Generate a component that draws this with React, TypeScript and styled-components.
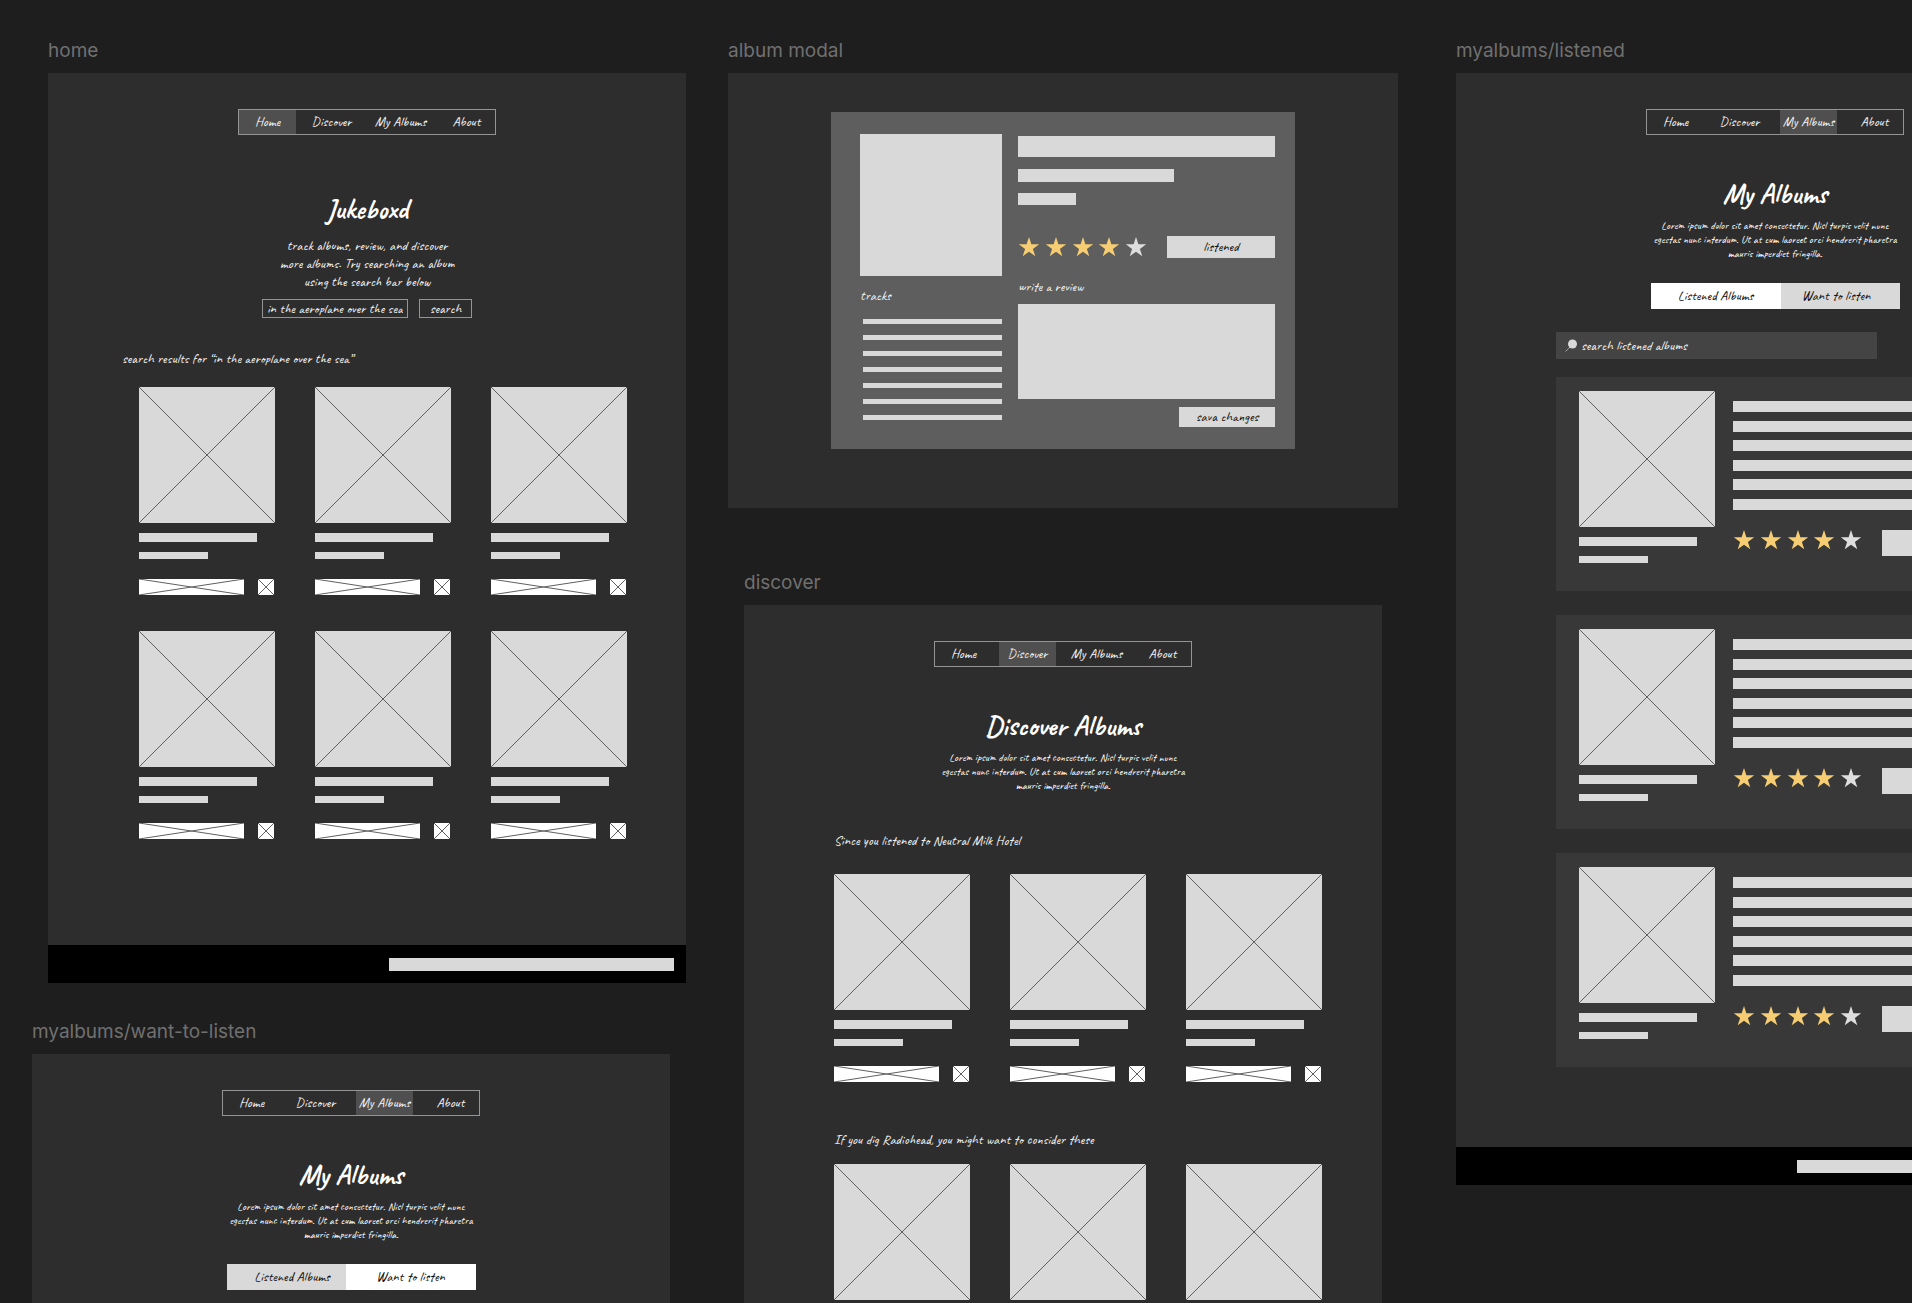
import React from "react";
import styled, { createGlobalStyle } from "styled-components";

const hand = `normal 400 14px/18px Caveat, Lato, "Liberation Sans", sans-serif`;
const fill = "#d9d9d9";

const GlobalStyle = createGlobalStyle`
  *, *::before, *::after { box-sizing: border-box; }
  body { margin: 0; background: #1e1e1e; color: #f2f2f2; font: ${hand}; }
  h1, h2, h3, p { margin: 0; font: inherit; }
  button, input, textarea { font: inherit; color: inherit; margin: 0; padding: 0; border: 0; border-radius: 0; background: none; }
`;

const Canvas = styled.main`
  position: relative;
  width: 100%;
  height: 100vh;
  overflow: hidden;
`;

const Artboard = styled.section<{ $x: number; $y: number; $w?: number }>`
  position: absolute;
  left: ${(p) => p.$x}px;
  top: ${(p) => p.$y}px;
  width: ${(p) => p.$w ?? 638}px;
`;

const BoardLabel = styled.h2`
  margin-bottom: 10px;
  color: #707070;
  font: normal 400 19px/24px Inter, "Liberation Sans", sans-serif;
`;

const Sheet = styled.div<{ $h: number; $top?: number }>`
  display: flex;
  flex-direction: column;
  align-items: center;
  min-height: ${(p) => p.$h}px;
  padding-top: ${(p) => p.$top ?? 36}px;
  background: #2d2d2d;
`;

const NavBar = styled.nav`
  display: grid;
  grid-template-columns: 64px 69px 66px 57px;
  width: 258px;
  height: 26px;
  border: 1px solid #949494;
`;

const NavLink = styled.a<{ $active: boolean }>`
  width: 57px;
  line-height: 24px;
  text-align: center;
  text-decoration: none;
  white-space: nowrap;
  color: inherit;
  background: ${(p) => (p.$active ? "#4f4f4f" : "transparent")};
`;

const Title = styled.h1<{ $gap: number }>`
  margin-top: ${(p) => p.$gap}px;
  color: #fff;
  font-size: 28px;
  font-weight: 700;
  line-height: 28px;
`;

const Intro = styled.p`
  width: 190px;
  margin-top: 14px;
  text-align: center;
  white-space: nowrap;
`;

const Blurb = styled.p`
  width: 250px;
  margin-top: 10px;
  text-align: center;
  white-space: nowrap;
  font-size: 11px;
  font-weight: 500;
  line-height: 14px;
  color: #fff;
`;

const SearchForm = styled.form`
  display: flex;
  gap: 11px;
  margin-top: 8px;
`;

const SearchInput = styled.input`
  && {
    width: 146px;
    height: 19px;
    padding: 0 4px;
    border: 1px solid #949494;
  }
`;

const SearchButton = styled.button`
  && {
    width: 53px;
    height: 19px;
    border: 1px solid #949494;
    line-height: 17px;
  }
`;

const Results = styled.div<{ $gap: number; $left: number }>`
  align-self: stretch;
  margin-top: ${(p) => p.$gap}px;
  padding-left: ${(p) => p.$left}px;
`;

const AlbumGrid = styled.div<{ $gap: number; $indent?: number }>`
  display: grid;
  grid-template-columns: repeat(3, 136px);
  gap: 36px 40px;
  margin-top: ${(p) => p.$gap}px;
  margin-left: ${(p) => p.$indent ?? 0}px;
`;

const CrossSvg = styled.svg`
  display: block;
  width: 100%;
  height: 100%;
`;

const Cover = styled.div<{ $size?: number }>`
  width: ${(p) => p.$size ?? 136}px;
  height: ${(p) => p.$size ?? 136}px;
  background: ${fill};
`;

const Bar = styled.div<{ $w?: number; $h: number; $gap?: number }>`
  width: ${(p) => (p.$w ? `${p.$w}px` : "100%")};
  height: ${(p) => p.$h}px;
  margin-top: ${(p) => p.$gap ?? 0}px;
  background: ${fill};
`;

const CardActions = styled.div`
  display: flex;
  gap: 14px;
  margin-top: 20px;
`;

const CrossButton = styled.button<{ $w: number }>`
  && {
    width: ${(p) => p.$w}px;
    height: 16px;
    background: #fff;
  }
`;

const Footer = styled.footer`
  display: flex;
  align-items: center;
  justify-content: flex-end;
  align-self: stretch;
  height: 38px;
  margin-top: auto;
  padding-right: 12px;
  background: #000;
`;

const Modal = styled.div`
  display: grid;
  grid-template-columns: 142px 257px;
  column-gap: 16px;
  width: 464px;
  height: 337px;
  padding: 22px 20px 22px 29px;
  background: #5e5e5e;
`;

const ModalMain = styled.div`
  display: flex;
  flex-direction: column;
  padding-top: 2px;
`;

const TrackList = styled.div`
  display: grid;
  gap: 11px;
  margin-top: 14px;
  padding-left: 3px;
`;

const FieldLabel = styled.label`
  display: block;
  margin-top: 20px;
`;

const TracksHeading = styled.h3`
  margin-top: 11px;
`;

const RatingRow = styled.div<{ $gap: number; $align: string }>`
  display: flex;
  align-items: ${(p) => p.$align};
  gap: 20px;
  margin-top: ${(p) => p.$gap}px;
`;

const Stars = styled.div`
  display: flex;
  justify-content: space-between;
  width: 129px;
  svg { display: block; width: 22px; height: 20px; }
`;

const GreyButton = styled.button<{ $w: number; $h: number }>`
  && {
    width: ${(p) => p.$w}px;
    height: ${(p) => p.$h}px;
    color: #111;
    background: ${fill};
  }
`;

const Review = styled.textarea`
  && {
    display: block;
    width: 100%;
    height: 95px;
    margin-top: 8px;
    background: ${fill};
    color: #111;
    resize: none;
  }
`;

const SaveRow = styled.div`
  display: flex;
  justify-content: flex-end;
  margin-top: 8px;
`;

const Toggle = styled.div`
  display: flex;
  margin-top: 23px;
`;

const ToggleButton = styled.button<{ $active: boolean }>`
  && {
    width: ${(p) => (p.$active ? 130 : 119)}px;
    height: 26px;
    color: #111;
    background: ${(p) => (p.$active ? "#fff" : fill)};
  }
  &&:first-child { padding-left: ${(p) => (p.$active ? 0 : 12)}px; }
  &&:last-child { padding-right: ${(p) => (p.$active ? 0 : 8)}px; }
`;

const ListColumn = styled.div`
  display: flex;
  flex-direction: column;
  gap: 24px;
  width: 438px;
  margin-top: 23px;
`;

const FilterField = styled.label`
  display: flex;
  align-items: center;
  gap: 4px;
  width: 321px;
  height: 27px;
  margin-bottom: -6px;
  padding: 0 9px;
  background: #444;
  svg { flex: none; }
  input { flex: 1; min-width: 0; }
  input::placeholder { color: #f2f2f2; opacity: 1; }
`;

const ListCard = styled.article`
  display: grid;
  grid-template-columns: 136px 1fr;
  gap: 18px;
  height: 214px;
  padding: 14px 20px 0 23px;
  background: #383838;
`;

const Lines = styled.div`
  display: flex;
  flex-direction: column;
  justify-content: space-between;
  height: 109px;
  margin-top: 10px;
`;

function Cross() {
  return (
    <CrossSvg viewBox="0 0 100 100" preserveAspectRatio="none" aria-hidden="true">
      <path
        d="M0 0L100 100M0 100L100 0"
        fill="none"
        stroke="#606060"
        strokeWidth="1"
        vectorEffect="non-scaling-stroke"
      />
    </CrossSvg>
  );
}

const pages = ["Home", "Discover", "My Albums", "About"];

function Nav({ active }: { active: string }) {
  return (
    <NavBar>
      {pages.map((p) => (
        <NavLink key={p} href="#" $active={p === active}>
          {p}
        </NavLink>
      ))}
    </NavBar>
  );
}

function AlbumCard() {
  return (
    <article>
      <Cover>
        <Cross />
      </Cover>
      <Bar $w={118} $h={9} $gap={10} />
      <Bar $w={69} $h={7} $gap={10} />
      <CardActions>
        <CrossButton $w={105}>
          <Cross />
        </CrossButton>
        <CrossButton $w={16}>
          <Cross />
        </CrossButton>
      </CardActions>
    </article>
  );
}

function Albums({ count, gap, indent }: { count: number; gap: number; indent?: number }) {
  return (
    <AlbumGrid $gap={gap} $indent={indent}>
      {Array.from({ length: count }, (_, i) => (
        <AlbumCard key={i} />
      ))}
    </AlbumGrid>
  );
}

function Rating() {
  return (
    <Stars role="img">
      {[0, 1, 2, 3, 4].map((i) => (
        <svg key={i} viewBox="0 0 22 20">
          <path
            d="M11 0L13.4 7.3H21.2L14.9 11.9L17.3 19.2L11 14.7L4.7 19.2L7.1 11.9L0.8 7.3H8.6Z"
            fill={i < 4 ? "#f6cd72" : "#dedede"}
          />
        </svg>
      ))}
    </Stars>
  );
}

function Lorem() {
  return (
    <Blurb>
      Lorem ipsum dolor sit amet consectetur. Nisl turpis velit nunc
      <br />
      egestas nunc interdum. Ut at cum laoreet orci hendrerit pharetra
      <br />
      mauris imperdiet fringilla.
    </Blurb>
  );
}

function AlbumsToggle({ listened }: { listened: boolean }) {
  return (
    <Toggle>
      <ToggleButton $active={listened}>Listened Albums</ToggleButton>
      <ToggleButton $active={!listened}>Want to listen</ToggleButton>
    </Toggle>
  );
}

function PageFooter() {
  return (
    <Footer>
      <Bar $w={285} $h={13} />
    </Footer>
  );
}

function ListenedCard() {
  return (
    <ListCard>
      <div>
        <Cover>
          <Cross />
        </Cover>
        <Bar $w={118} $h={9} $gap={10} />
        <Bar $w={69} $h={7} $gap={10} />
      </div>
      <div>
        <Lines>
          {[0, 1, 2, 3, 4, 5].map((i) => (
            <Bar key={i} $h={11} />
          ))}
        </Lines>
        <RatingRow $gap={20} $align="flex-start">
          <Rating />
          <GreyButton $w={92} $h={26} />
        </RatingRow>
      </div>
    </ListCard>
  );
}

export default function App() {
  return (
    <>
      <GlobalStyle />
      <Canvas>
        <Artboard $x={48} $y={39}>
          <BoardLabel>home</BoardLabel>
          <Sheet $h={910}>
            <Nav active="Home" />
            <Title $gap={60}>Jukeboxd</Title>
            <Intro>
              track albums, review, and discover
              <br />
              more albums. Try searching an album
              <br />
              using the search bar below
            </Intro>
            <SearchForm onSubmit={(e) => e.preventDefault()}>
              <SearchInput aria-label="album" defaultValue="in the aeroplane over the sea" />
              <SearchButton>search</SearchButton>
            </SearchForm>
            <Results $gap={32} $left={74}>
              <h3>search results for “in the aeroplane over the sea”</h3>
              <Albums count={6} gap={19} indent={17} />
            </Results>
            <PageFooter />
          </Sheet>
        </Artboard>

        <Artboard $x={728} $y={39} $w={670}>
          <BoardLabel>album modal</BoardLabel>
          <Sheet $h={435} $top={39}>
            <Modal>
              <div>
                <Cover $size={142} />
                <TracksHeading>tracks</TracksHeading>
                <TrackList>
                  {[0, 1, 2, 3, 4, 5, 6].map((i) => (
                    <Bar key={i} $h={5} />
                  ))}
                </TrackList>
              </div>
              <ModalMain>
                <Bar $h={21} />
                <Bar $w={156} $h={13} $gap={12} />
                <Bar $w={58} $h={12} $gap={11} />
                <RatingRow $gap={31} $align="center">
                  <Rating />
                  <GreyButton $w={108} $h={22}>
                    listened
                  </GreyButton>
                </RatingRow>
                <FieldLabel htmlFor="review">write a review</FieldLabel>
                <Review id="review" />
                <SaveRow>
                  <GreyButton $w={96} $h={20}>
                    sava changes
                  </GreyButton>
                </SaveRow>
              </ModalMain>
            </Modal>
          </Sheet>
        </Artboard>

        <Artboard $x={744} $y={571}>
          <BoardLabel>discover</BoardLabel>
          <Sheet $h={910}>
            <Nav active="Discover" />
            <Title $gap={45}>Discover Albums</Title>
            <Lorem />
            <Results $gap={40} $left={90}>
              <h3>Since you listened to Neutral Milk Hotel</h3>
              <Albums count={3} gap={24} />
            </Results>
            <Results $gap={49} $left={90}>
              <h3>If you dig Radiohead, you might want to consider these</h3>
              <Albums count={3} gap={15} />
            </Results>
          </Sheet>
        </Artboard>

        <Artboard $x={1456} $y={39}>
          <BoardLabel>myalbums/listened</BoardLabel>
          <Sheet $h={1112}>
            <Nav active="My Albums" />
            <Title $gap={45}>My Albums</Title>
            <Lorem />
            <AlbumsToggle listened />
            <ListColumn>
              <FilterField>
                <svg width="12" height="14" viewBox="0 0 12 14" aria-hidden="true">
                  <path d="M0.5 12.5L6 7" stroke="#a0a0a0" strokeWidth="1" />
                  <circle cx="7.5" cy="5" r="4.5" fill={fill} />
                </svg>
                <input placeholder="search listened albums" />
              </FilterField>
              <ListenedCard />
              <ListenedCard />
              <ListenedCard />
            </ListColumn>
            <PageFooter />
          </Sheet>
        </Artboard>

        <Artboard $x={32} $y={1020}>
          <BoardLabel>myalbums/want-to-listen</BoardLabel>
          <Sheet $h={910}>
            <Nav active="My Albums" />
            <Title $gap={45}>My Albums</Title>
            <Lorem />
            <AlbumsToggle listened={false} />
          </Sheet>
        </Artboard>
      </Canvas>
    </>
  );
}
